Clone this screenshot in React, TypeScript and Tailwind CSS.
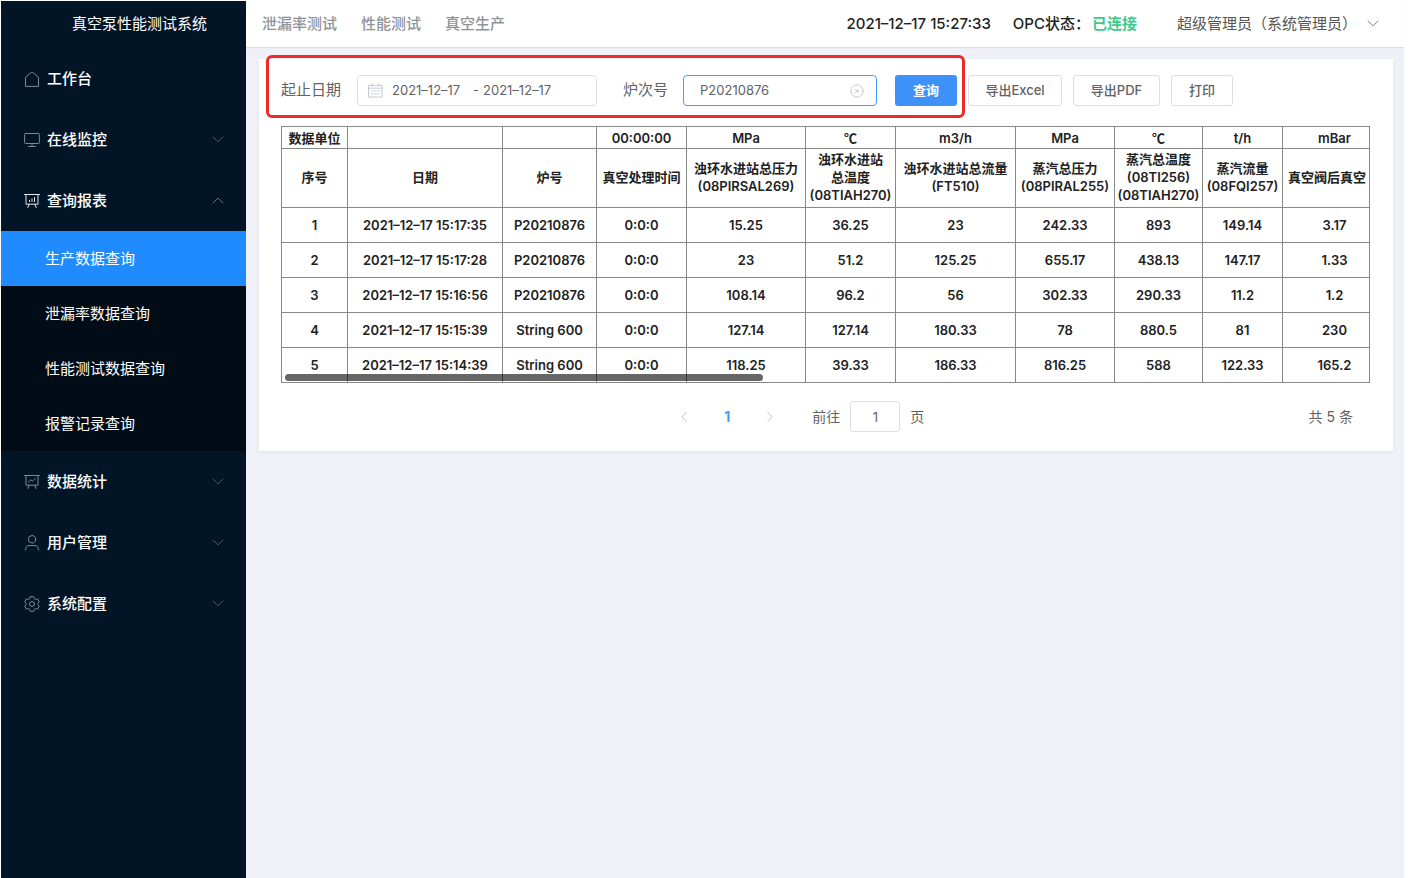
import React from 'react';

type IconProps = { className?: string };

const svgProps = {
  viewBox: '0 0 16 16',
  fill: 'none',
  stroke: 'currentColor',
  strokeLinecap: 'round' as const,
  strokeLinejoin: 'round' as const,
  'aria-hidden': true,
};

const HomeIcon = ({ className }: IconProps) => (
  <svg {...svgProps} className={className}>
    <path d="M1.500 15V6.200L8 .9l6.500 5.300V15z" />
  </svg>
);

const MonitorIcon = ({ className }: IconProps) => (
  <svg {...svgProps} className={className}>
    <rect x=".6" y="1.500" width="14.800" height="10" rx="1" />
    <path d="M8 11.500v3M4.500 14.500h7" />
  </svg>
);

const ReportIcon = ({ className }: IconProps) => (
  <svg {...svgProps} className={className}>
    <path d="M.5 1.500h15M2 1.500v9.700h12V1.500M5.200 11.200l-1.400 3.300M10.800 11.200l1.400 3.300" />
    <path d="M5.500 8.500V7.300M8 8.500V6M10.500 8.500V4.500" />
  </svg>
);

const StatsIcon = ({ className }: IconProps) => (
  <svg {...svgProps} className={className}>
    <path d="M.5 1.500h15M2 1.500v9.700h12V1.500M5.200 11.200l-1.400 3.300M10.800 11.200l1.400 3.300" />
    <path d="M4.500 8l2.300-2.200 1.700 1.400 2.800-2.700" />
  </svg>
);

const UserIcon = ({ className }: IconProps) => (
  <svg {...svgProps} className={className}>
    <circle cx="8" cy="4.300" r="3.700" />
    <path d="M1.700 15v-1.300c0-2 1.500-3.200 3.300-3.200h6c1.800 0 3.300 1.200 3.300 3.200V15" />
  </svg>
);

const GearIcon = ({ className }: IconProps) => (
  <svg {...svgProps} className={className}>
    <path d="M6.300.7h3.400l.6 1.900 1.300.8 2-.5 1.700 3L13.900 7.300v1.400l1.400 1.400-1.700 3-2-.5-1.300.8-.6 1.900H6.300l-.6-1.900-1.300-.8-2 .5-1.700-3 1.400-1.400V7.300L.7 5.900l1.700-3 2 .5 1.300-.8z" />
    <circle cx="8" cy="8" r="2.500" />
  </svg>
);

const CalendarIcon = ({ className }: IconProps) => (
  <svg {...svgProps} className={className}>
    <path d="M1 2.500h14V15H1zM1 5.500h14M4.500 1v2.500M11.500 1v2.500" />
    <path d="M4 8.500h1.500M7.300 8.500h1.500M10.500 8.500H12M4 11.500h1.500M7.300 11.500h1.500M10.500 11.500H12" />
  </svg>
);

const ClearIcon = ({ className }: IconProps) => (
  <svg {...svgProps} className={className}>
    <circle cx="8" cy="8" r="7" />
    <path d="M6 6l4 4M10 6l-4 4" />
  </svg>
);

const ChevronDown = ({ className }: IconProps) => (
  <svg {...svgProps} className={className}>
    <path d="M1.500 4L8 10.500 14.500 4" />
  </svg>
);

const ChevronUp = ({ className }: IconProps) => (
  <svg {...svgProps} className={className}>
    <path d="M1.500 10.500L8 4l6.500 6.500" />
  </svg>
);

const ChevronLeft = ({ className }: IconProps) => (
  <svg {...svgProps} className={className}>
    <path d="M11 2L5 8l6 6" />
  </svg>
);

const ChevronRight = ({ className }: IconProps) => (
  <svg {...svgProps} className={className}>
    <path d="M5 2l6 6-6 6" />
  </svg>
);

type MenuItem = {
  label: string;
  icon: React.FC<IconProps>;
  expandable?: boolean;
  children?: string[];
};

const menu: MenuItem[] = [
  { label: '工作台', icon: HomeIcon },
  { label: '在线监控', icon: MonitorIcon, expandable: true },
  {
    label: '查询报表',
    icon: ReportIcon,
    expandable: true,
    children: ['生产数据查询', '泄漏率数据查询', '性能测试数据查询', '报警记录查询'],
  },
  { label: '数据统计', icon: StatsIcon, expandable: true },
  { label: '用户管理', icon: UserIcon, expandable: true },
  { label: '系统配置', icon: GearIcon, expandable: true },
];

type Column = { unit: string; title: string[]; width: number; alignLeft?: boolean };

const columns: Column[] = [
  { unit: '数据单位', title: ['序号'], width: 66 },
  { unit: '', title: ['日期'], width: 155 },
  { unit: '', title: ['炉号'], width: 94 },
  { unit: '00:00:00', title: ['真空处理时间'], width: 90 },
  { unit: 'MPa', title: ['浊环水进站总压力', '(08PIRSAL269)'], width: 119 },
  { unit: '℃', title: ['浊环水进站', '总温度', '(08TIAH270)'], width: 90 },
  { unit: 'm3/h', title: ['浊环水进站总流量', '(FT510)'], width: 120 },
  { unit: 'MPa', title: ['蒸汽总压力', '(08PIRAL255)'], width: 99 },
  { unit: '℃', title: ['蒸汽总温度', '(08TI256)', '(08TIAH270)'], width: 88 },
  { unit: 't/h', title: ['蒸汽流量', '(08FQI257)'], width: 80 },
  { unit: 'mBar', title: ['真空阀后真空'], width: 104, alignLeft: true },
];

const rows = [
  ['1', '2021–12–17 15:17:35', 'P20210876', '0:0:0', '15.25', '36.25', '23', '242.33', '893', '149.14', '3.17'],
  ['2', '2021–12–17 15:17:28', 'P20210876', '0:0:0', '23', '51.2', '125.25', '655.17', '438.13', '147.17', '1.33'],
  ['3', '2021–12–17 15:16:56', 'P20210876', '0:0:0', '108.14', '96.2', '56', '302.33', '290.33', '11.2', '1.2'],
  ['4', '2021–12–17 15:15:39', 'String 600', '0:0:0', '127.14', '127.14', '180.33', '78', '880.5', '81', '230'],
  ['5', '2021–12–17 15:14:39', 'String 600', '0:0:0', '118.25', '39.33', '186.33', '816.25', '588', '122.33', '165.2'],
];

const Sidebar = () => (
  <aside className="w-[245px] shrink-0 bg-[#021527] text-white">
    <h1 className="h-[47px] pl-8 text-center text-[15px] leading-[46px]">真空泵性能测试系统</h1>
    <nav>
      {menu.map(({ label, icon: Icon, expandable, children }) => (
        <div key={label}>
          <button
            type="button"
            className="flex h-[61px] w-full items-center gap-[7px] pl-[23px] pr-[22px] text-[15px] font-medium"
          >
            <Icon className={children ? 'size-4 text-gray-200' : 'size-4 text-[#7d8893]'} />
            <span className="flex-1 pt-[2px] text-left">{label}</span>
            {expandable &&
              (children ? (
                <ChevronUp className="size-3 text-[#8b95a0]" />
              ) : (
                <ChevronDown className="size-3 text-[#65717d]" />
              ))}
          </button>
          {children && (
            <ul className="bg-[#010c17]">
              {children.map((child, i) => (
                <li key={child}>
                  <a
                    href="#"
                    className={
                      i === 0
                        ? 'block bg-[#1f8bff] pl-11 text-[15px] leading-[55px]'
                        : 'block pl-11 text-[15px] leading-[55px]'
                    }
                  >
                    {child}
                  </a>
                </li>
              ))}
            </ul>
          )}
        </div>
      ))}
    </nav>
  </aside>
);

const Header = () => (
  <header className="flex h-[46px] items-center bg-white text-[15px] shadow-[0_1px_1px_rgba(0,0,0,0.08)]">
    <nav className="flex gap-6 pl-4 font-medium text-[#8f9399]">
      <a href="#">泄漏率测试</a>
      <a href="#">性能测试</a>
      <a href="#">真空生产</a>
    </nav>
    <div className="ml-auto flex items-center pr-[25px] text-[#222]">
      <time className="font-medium">2021–12–17 15:27:33</time>
      <span className="ml-[22px] mr-[2px] font-medium">OPC状态：</span>
      <span className="font-bold text-[#3ccb8c]">已连接</span>
      <button type="button" className="ml-10 flex items-center gap-[10px] text-[#555]">
        超级管理员（系统管理员）
        <ChevronDown className="size-3" />
      </button>
    </div>
  </header>
);

const FilterBar = () => (
  <form className="flex items-center pl-[22px] text-[13px] text-[#606266]">
    <div className="relative flex items-center">
      <label htmlFor="date-start" className="text-[15px]">
        起止日期
      </label>
      <div className="ml-4 flex h-[31px] w-[240px] items-center rounded border border-[#dcdfe6] pl-[10px]">
        <CalendarIcon className="size-[15px] text-[#c0c4cc]" />
        <input id="date-start" className="ml-[9px] w-[81px] outline-none" defaultValue="2021–12–17" />
        <span>-</span>
        <input aria-label="结束日期" className="ml-1 w-[81px] outline-none" defaultValue="2021–12–17" />
      </div>
      <label htmlFor="furnace" className="ml-[26px] text-[15px]">
        炉次号
      </label>
      <div className="ml-[15px] flex h-[31px] w-[194px] items-center rounded border border-[#409eff] px-3">
        <input id="furnace" className="w-0 flex-1 pl-1 outline-none" defaultValue="P20210876" />
        <button type="button" aria-label="清除">
          <ClearIcon className="size-[14px] text-[#c0c4cc]" />
        </button>
      </div>
      <button type="button" className="ml-[18px] h-[31px] w-[62px] rounded-[3px] bg-[#3d91f7] font-bold text-white">
        查询
      </button>
      <div className="pointer-events-none absolute -bottom-3 -left-[15px] -right-2 -top-5 rounded-md border-[3px] border-[#ec2b28]" />
    </div>
    <div className="ml-[11px] flex gap-[11px] font-medium">
      <button type="button" className="h-[31px] w-[94px] rounded-[3px] border border-[#dcdfe6]">
        导出Excel
      </button>
      <button type="button" className="h-[31px] w-[87px] rounded-[3px] border border-[#dcdfe6]">
        导出PDF
      </button>
      <button type="button" className="h-[31px] w-[62px] rounded-[3px] border border-[#dcdfe6]">
        打印
      </button>
    </div>
  </form>
);

const DataTable = () => (
  <div className="relative ml-[22px] mr-[23px] mt-5 border-x border-[#888]">
    <div className="overflow-x-auto [scrollbar-width:none]">
      <table className="-ml-px w-[1105px] table-fixed border-collapse text-center text-[13px] font-semibold leading-[18px] text-[#222]">
        <colgroup>
          {columns.map((col, i) => (
            <col key={i} style={{ width: col.width }} />
          ))}
        </colgroup>
        <thead>
          <tr className="h-[22px]">
            {columns.map((col, i) => (
              <th key={i} className="whitespace-nowrap border border-[#888] font-semibold">
                {col.unit === '℃' ? <span className="font-['Noto_Sans_CJK_SC',sans-serif]">℃</span> : col.unit}
              </th>
            ))}
          </tr>
          <tr className="h-[59px]">
            {columns.map((col, i) => (
              <th
                key={i}
                className={
                  col.alignLeft
                    ? 'whitespace-nowrap border border-[#888] pb-[2px] pl-[5px] text-left font-semibold'
                    : 'whitespace-nowrap border border-[#888] pb-[2px] font-semibold'
                }
              >
                {col.title.map((line) => (
                  <div key={line}>{line}</div>
                ))}
              </th>
            ))}
          </tr>
        </thead>
        <tbody>
          {rows.map((row) => (
            <tr key={row[0]} className="h-[35px]">
              {row.map((cell, i) => (
                <td key={i} className="whitespace-nowrap border border-[#888]">
                  {cell}
                </td>
              ))}
            </tr>
          ))}
        </tbody>
      </table>
    </div>
    <div className="absolute bottom-[2px] left-[3px] h-[7px] w-[44%] rounded-full bg-black/60" />
  </div>
);

const Pagination = () => (
  <div className="mt-[18px] flex items-center pl-[22px] pr-10 text-sm text-[#606266]">
    <div className="flex flex-1 items-center justify-center pl-[13px]">
      <button type="button" aria-label="上一页">
        <ChevronLeft className="size-3 text-[#a8abb2]" />
      </button>
      <button type="button" className="mx-[34px] font-bold text-[#409eff]">
        1
      </button>
      <button type="button" aria-label="下一页">
        <ChevronRight className="size-3 text-[#a8abb2]" />
      </button>
      <label htmlFor="page" className="ml-9">
        前往
      </label>
      <input
        id="page"
        className="mx-[10px] h-[31px] w-[50px] rounded-[3px] border border-[#dcdfe6] text-center text-[13px]"
        defaultValue="1"
      />
      <span>页</span>
    </div>
    <span>共 5 条</span>
  </div>
);

const App = () => {
  return (
    <div className="flex min-h-screen bg-white pl-px pr-[6px] pt-px font-['Inter','Noto_Sans_CJK_SC',sans-serif]">
      <Sidebar />
      <div className="min-w-0 flex-1 bg-[#f0f0f8]">
        <Header />
        <main className="ml-[13px] mr-[11px] mt-3 bg-white pb-[19px] pt-4 shadow-[0_1px_4px_rgba(0,0,0,0.06)]">
          <FilterBar />
          <DataTable />
          <Pagination />
        </main>
      </div>
    </div>
  );
};

export default App;
